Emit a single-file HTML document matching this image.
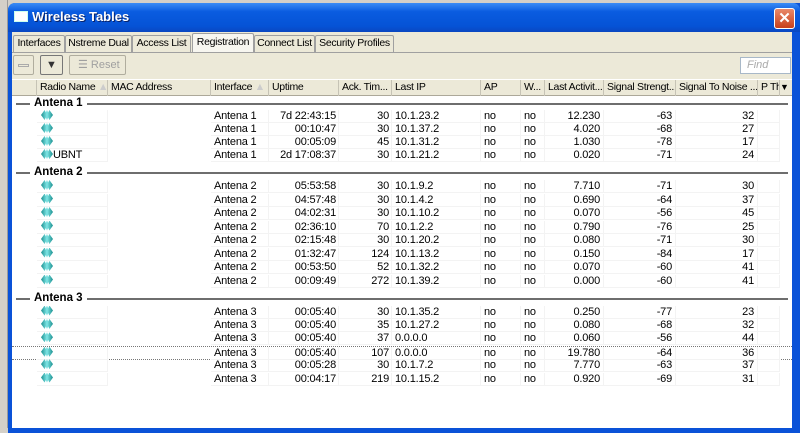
<!DOCTYPE html>
<html><head><style>
*{margin:0;padding:0;box-sizing:border-box}
body{width:800px;height:428px;overflow:hidden;background:#d4d0c8;font-family:"Liberation Sans",sans-serif;font-size:11px;color:#000;position:relative}
.abs{position:absolute}
#win{left:8px;top:3px;width:800px;height:430px;background:#0a52d8;border-radius:7px 7px 0 0}
#title{left:8px;top:3px;width:792px;height:29px;background:linear-gradient(#3b8cf5,#0a5ce0 30%,#0553d6 80%,#0a47c0);border-radius:7px 7px 0 0}
#title .t{left:24px;top:6px;color:#fff;font-weight:bold;font-size:13px;text-shadow:1px 1px #0a246a}
#content{left:12px;top:32px;width:780px;height:396px;background:#ece9d8}
.tab{top:35px;height:17px;background:#ece9d8;border:1px solid #a0a0a0;border-bottom:none;line-height:15px;text-align:center;font-size:10.5px;letter-spacing:-0.3px;white-space:nowrap;overflow:hidden;border-radius:2px 2px 0 0}
.btn{border:1px solid #b0ad9e;background:#ece9d8;border-radius:2px}
#tbl{left:12px;top:96px;width:780px;height:332px;background:#fff}
#hdr{left:12px;top:79px;width:780px;height:17px;background:#ece9d8;border-top:1px solid #fff;border-bottom:1px solid #aca899;font-size:10.5px;letter-spacing:-0.3px}
.h{position:absolute;top:0;height:16px;line-height:15px;border-right:1px solid #c6c3b5;padding-left:3px;white-space:nowrap;overflow:hidden}
.row{position:absolute;left:12px;width:780px;height:13px;line-height:13px;letter-spacing:-0.2px}
.row span{position:absolute;top:0;height:13px;white-space:nowrap;border-right:1px solid #f3f3f3;border-bottom:1px solid #f3f3f3}
.i{left:25px;width:71px;padding-left:4px}
.m{left:96px;width:103px;border:none!important}
.f{left:199px;width:58px;padding-left:3px}
.u{left:257px;width:70px;text-align:right;padding-right:2px}
.a{left:327px;width:53px;text-align:right;padding-right:2px}
.p{left:380px;width:89px;padding-left:3px}
.ap{left:469px;width:40px;padding-left:3px}
.w{left:509px;width:24px;padding-left:3px}
.la{left:533px;width:59px;text-align:right;padding-right:3px}
.ss{left:592px;width:72px;text-align:right;padding-right:3px}
.sn{left:664px;width:82px;text-align:right;padding-right:3px}
.pt{left:746px;width:22px}
.ic{display:inline-block;width:12px;height:10px;vertical-align:-1px;background:linear-gradient(90deg,#1b8f8f,#7fe6e6 50%,#1b8f8f);clip-path:polygon(0 50%,30% 0,40% 25%,50% 0,60% 25%,70% 0,100% 50%,70% 100%,60% 75%,50% 100%,40% 75%,30% 100%)}
.grp{position:absolute;left:12px;width:780px;height:14px}
.grp b{position:absolute;left:18px;top:0;background:#fff;padding:0 4px;font-size:11.5px;line-height:14px}
.grp i{position:absolute;left:4px;right:4px;top:7px;border-top:2px solid #6e6e6e}
</style></head><body>
<div class="abs" style="left:0;top:0;width:8px;height:428px;background:#d4d0c8;border-right:1px solid #9a9a9a"></div>
<div id="win" class="abs"></div>
<div id="title" class="abs"><div class="abs" style="left:6px;top:8px;width:14px;height:11px;background:#fff;border:1px solid #cfe"></div><div class="t abs">Wireless Tables</div>
<div class="abs" style="right:5px;top:5px;width:21px;height:21px;background:linear-gradient(#e9896a,#c8401c);border:1px solid #fff;border-radius:3px;color:#fff;font-weight:bold;font-size:15px;text-align:center;line-height:19px">✕</div></div>
<div id="content" class="abs"></div>
<div class="tab abs" style="left:13px;width:52px">Interfaces</div>
<div class="tab abs" style="left:65px;width:67px">Nstreme Dual</div>
<div class="tab abs" style="left:132px;width:59px">Access List</div>
<div class="tab abs" style="left:192px;width:62px;top:33px;height:20px;background:#f7f6f0;line-height:17px">Registration</div>
<div class="tab abs" style="left:254px;width:61px">Connect List</div>
<div class="tab abs" style="left:315px;width:79px">Security Profiles</div>
<div class="abs" style="left:12px;top:52px;width:780px;border-top:1px solid #a0a0a0"></div>
<div class="btn abs" style="left:13px;top:55px;width:21px;height:20px"><div class="abs" style="left:4px;top:8px;width:11px;height:3px;border:1px solid #aaa"></div></div>
<div class="btn abs" style="left:40px;top:55px;width:23px;height:20px;border-color:#777;text-align:center;line-height:18px;font-weight:bold;color:#333">▼</div>
<div class="btn abs" style="left:69px;top:55px;width:57px;height:20px;color:#a0a0a0;line-height:18px;padding-left:8px">☰ Reset</div>
<div class="abs" style="left:740px;top:57px;width:51px;height:17px;background:#fff;border:1px solid #a8b8c8;color:#aaa;font-style:italic;padding-left:6px;line-height:15px">Find</div>
<div id="hdr" class="abs">
<div class="h" style="left:0;width:25px"></div>
<div class="h" style="left:25px;width:71px">Radio Name <span style="color:#ccc">▲</span></div>
<div class="h" style="left:96px;width:103px">MAC Address</div>
<div class="h" style="left:199px;width:58px">Interface <span style="color:#ccc">▲</span></div>
<div class="h" style="left:257px;width:70px">Uptime</div>
<div class="h" style="left:327px;width:53px">Ack. Tim...</div>
<div class="h" style="left:380px;width:89px">Last IP</div>
<div class="h" style="left:469px;width:40px">AP</div>
<div class="h" style="left:509px;width:24px">W...</div>
<div class="h" style="left:533px;width:59px">Last Activit...</div>
<div class="h" style="left:592px;width:72px">Signal Strengt...</div>
<div class="h" style="left:664px;width:82px">Signal To Noise ...</div>
<div class="h" style="left:746px;width:22px">P Th</div>
<div class="h" style="left:768px;width:12px;border:none;padding:0;font-size:9px">▼</div>
</div>
<div id="tbl" class="abs"></div>
<div class="abs" style="left:792px;top:32px;width:8px;height:396px;background:#0a52d8"></div>

<div class="grp" style="top:96px"><i></i><b>Antena 1</b></div>
<div class="row" style="top:110px"><span class="i"><s class="ic"></s></span><span class="m"></span><span class="f">Antena 1</span><span class="u">7d 22:43:15</span><span class="a">30</span><span class="p">10.1.23.2</span><span class="ap">no</span><span class="w">no</span><span class="la">12.230</span><span class="ss">-63</span><span class="sn">32</span><span class="pt"></span></div>
<div class="row" style="top:123px"><span class="i"><s class="ic"></s></span><span class="m"></span><span class="f">Antena 1</span><span class="u">00:10:47</span><span class="a">30</span><span class="p">10.1.37.2</span><span class="ap">no</span><span class="w">no</span><span class="la">4.020</span><span class="ss">-68</span><span class="sn">27</span><span class="pt"></span></div>
<div class="row" style="top:136px"><span class="i"><s class="ic"></s></span><span class="m"></span><span class="f">Antena 1</span><span class="u">00:05:09</span><span class="a">45</span><span class="p">10.1.31.2</span><span class="ap">no</span><span class="w">no</span><span class="la">1.030</span><span class="ss">-78</span><span class="sn">17</span><span class="pt"></span></div>
<div class="row" style="top:149px"><span class="i"><s class="ic"></s>UBNT</span><span class="m"></span><span class="f">Antena 1</span><span class="u">2d 17:08:37</span><span class="a">30</span><span class="p">10.1.21.2</span><span class="ap">no</span><span class="w">no</span><span class="la">0.020</span><span class="ss">-71</span><span class="sn">24</span><span class="pt"></span></div>

<div class="grp" style="top:165px"><i></i><b>Antena 2</b></div>
<div class="row" style="top:180px"><span class="i"><s class="ic"></s></span><span class="m"></span><span class="f">Antena 2</span><span class="u">05:53:58</span><span class="a">30</span><span class="p">10.1.9.2</span><span class="ap">no</span><span class="w">no</span><span class="la">7.710</span><span class="ss">-71</span><span class="sn">30</span><span class="pt"></span></div>
<div class="row" style="top:193.5px"><span class="i"><s class="ic"></s></span><span class="m"></span><span class="f">Antena 2</span><span class="u">04:57:48</span><span class="a">30</span><span class="p">10.1.4.2</span><span class="ap">no</span><span class="w">no</span><span class="la">0.690</span><span class="ss">-64</span><span class="sn">37</span><span class="pt"></span></div>
<div class="row" style="top:207px"><span class="i"><s class="ic"></s></span><span class="m"></span><span class="f">Antena 2</span><span class="u">04:02:31</span><span class="a">30</span><span class="p">10.1.10.2</span><span class="ap">no</span><span class="w">no</span><span class="la">0.070</span><span class="ss">-56</span><span class="sn">45</span><span class="pt"></span></div>
<div class="row" style="top:220.5px"><span class="i"><s class="ic"></s></span><span class="m"></span><span class="f">Antena 2</span><span class="u">02:36:10</span><span class="a">70</span><span class="p">10.1.2.2</span><span class="ap">no</span><span class="w">no</span><span class="la">0.790</span><span class="ss">-76</span><span class="sn">25</span><span class="pt"></span></div>
<div class="row" style="top:234px"><span class="i"><s class="ic"></s></span><span class="m"></span><span class="f">Antena 2</span><span class="u">02:15:48</span><span class="a">30</span><span class="p">10.1.20.2</span><span class="ap">no</span><span class="w">no</span><span class="la">0.080</span><span class="ss">-71</span><span class="sn">30</span><span class="pt"></span></div>
<div class="row" style="top:247.5px"><span class="i"><s class="ic"></s></span><span class="m"></span><span class="f">Antena 2</span><span class="u">01:32:47</span><span class="a">124</span><span class="p">10.1.13.2</span><span class="ap">no</span><span class="w">no</span><span class="la">0.150</span><span class="ss">-84</span><span class="sn">17</span><span class="pt"></span></div>
<div class="row" style="top:261px"><span class="i"><s class="ic"></s></span><span class="m"></span><span class="f">Antena 2</span><span class="u">00:53:50</span><span class="a">52</span><span class="p">10.1.32.2</span><span class="ap">no</span><span class="w">no</span><span class="la">0.070</span><span class="ss">-60</span><span class="sn">41</span><span class="pt"></span></div>
<div class="row" style="top:274.5px"><span class="i"><s class="ic"></s></span><span class="m"></span><span class="f">Antena 2</span><span class="u">00:09:49</span><span class="a">272</span><span class="p">10.1.39.2</span><span class="ap">no</span><span class="w">no</span><span class="la">0.000</span><span class="ss">-60</span><span class="sn">41</span><span class="pt"></span></div>

<div class="grp" style="top:291px"><i></i><b>Antena 3</b></div>
<div class="row" style="top:305.5px"><span class="i"><s class="ic"></s></span><span class="m"></span><span class="f">Antena 3</span><span class="u">00:05:40</span><span class="a">30</span><span class="p">10.1.35.2</span><span class="ap">no</span><span class="w">no</span><span class="la">0.250</span><span class="ss">-77</span><span class="sn">23</span><span class="pt"></span></div>
<div class="row" style="top:318.9px"><span class="i"><s class="ic"></s></span><span class="m"></span><span class="f">Antena 3</span><span class="u">00:05:40</span><span class="a">35</span><span class="p">10.1.27.2</span><span class="ap">no</span><span class="w">no</span><span class="la">0.080</span><span class="ss">-68</span><span class="sn">32</span><span class="pt"></span></div>
<div class="row" style="top:332.3px"><span class="i"><s class="ic"></s></span><span class="m"></span><span class="f">Antena 3</span><span class="u">00:05:40</span><span class="a">37</span><span class="p">0.0.0.0</span><span class="ap">no</span><span class="w">no</span><span class="la">0.060</span><span class="ss">-56</span><span class="sn">44</span><span class="pt"></span></div>
<div class="row" style="top:345.7px;height:14px;border-top:1px dotted #777;border-bottom:1px dotted #777"><span class="i"><s class="ic"></s></span><span class="m"></span><span class="f">Antena 3</span><span class="u">00:05:40</span><span class="a">107</span><span class="p">0.0.0.0</span><span class="ap">no</span><span class="w">no</span><span class="la">19.780</span><span class="ss">-64</span><span class="sn">36</span><span class="pt"></span></div>
<div class="row" style="top:359.1px"><span class="i"><s class="ic"></s></span><span class="m"></span><span class="f">Antena 3</span><span class="u">00:05:28</span><span class="a">30</span><span class="p">10.1.7.2</span><span class="ap">no</span><span class="w">no</span><span class="la">7.770</span><span class="ss">-63</span><span class="sn">37</span><span class="pt"></span></div>
<div class="row" style="top:372.5px"><span class="i"><s class="ic"></s></span><span class="m"></span><span class="f">Antena 3</span><span class="u">00:04:17</span><span class="a">219</span><span class="p">10.1.15.2</span><span class="ap">no</span><span class="w">no</span><span class="la">0.920</span><span class="ss">-69</span><span class="sn">31</span><span class="pt"></span></div>
</body></html>
